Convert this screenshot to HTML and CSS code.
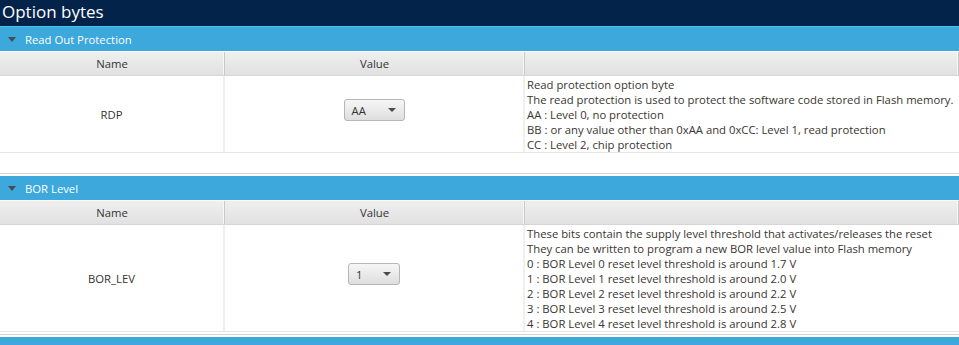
FILE: index.html
```html
<!DOCTYPE html>
<html lang="en">
<head>
    <meta charset="UTF-8">
    <title>Option bytes</title>
    <link rel="stylesheet" href="styles.css">
</head>
<body>

    <div class="titlebar">Option bytes</div>

    <!-- Read Out Protection -->
    <section class="pane">
        <div class="pane-head"><span class="caret"></span>Read Out Protection</div>
        <div class="pane-body rdp-body">
            <div class="grid grid-head">
                <div class="cell">Name</div>
                <div class="cell">Value</div>
                <div class="cell"></div>
            </div>
            <div class="grid grid-row">
                <div class="cell name">RDP</div>
                <div class="cell value">
                    <div class="combo combo-wide"><span>AA</span><span class="arrow"></span></div>
                </div>
                <div class="cell desc">
                    Read protection option byte<br>
                    The read protection is used to protect the software code stored in Flash memory.<br>
                    AA : Level 0, no protection<br>
                    BB : or any value other than 0xAA and 0xCC: Level 1, read protection<br>
                    CC : Level 2, chip protection
                </div>
            </div>
        </div>
    </section>

    <!-- BOR Level -->
    <section class="pane">
        <div class="pane-head"><span class="caret"></span>BOR Level</div>
        <div class="pane-body bor-body">
            <div class="grid grid-head">
                <div class="cell">Name</div>
                <div class="cell">Value</div>
                <div class="cell"></div>
            </div>
            <div class="grid grid-row">
                <div class="cell name">BOR_LEV</div>
                <div class="cell value">
                    <div class="combo"><span>1</span><span class="arrow"></span></div>
                </div>
                <div class="cell desc">
                    These bits contain the supply level threshold that activates/releases the reset<br>
                    They can be written to program a new BOR level value into Flash memory<br>
                    0 : BOR Level 0 reset level threshold is around 1.7 V<br>
                    1 : BOR Level 1 reset level threshold is around 2.0 V<br>
                    2 : BOR Level 2 reset level threshold is around 2.2 V<br>
                    3 : BOR Level 3 reset level threshold is around 2.5 V<br>
                    4 : BOR Level 4 reset level threshold is around 2.8 V
                </div>
            </div>
        </div>
    </section>

    <section class="pane">
        <div class="pane-head"></div>
    </section>

</body>
</html>
```

FILE: styles.css
```css
/* Global */
body {
    margin: 0;
    font-family: 'Open Sans', 'Noto Sans', sans-serif;
    font-size: 11.3px;
    color: #333;
    background: #fff;
    overflow: hidden;
}

/* Title bar */
.titlebar {
    height: 26px;
    line-height: 24px;
    padding-left: 2px;
    background: #03234a;
    border-bottom: 1px solid #3fc6ee;
    color: #fff;
    font-size: 17px;
}

/* Titled panes */
.pane {
    margin-bottom: 2px;
}

.pane-head {
    height: 24px;
    background: #3ca8dc;
    color: #fff;
    display: flex;
    align-items: center;
}

.caret {
    width: 0;
    height: 0;
    margin: 1px 9px 0 8px;
    border-left: 4px solid transparent;
    border-right: 4px solid transparent;
    border-top: 5px solid #474c52;
}

.pane-body {
    box-sizing: border-box;
    border-bottom: 1px solid #d4d4d4;
    padding-top: 1px;
    overflow: hidden;
}

.rdp-body {
    height: 123px;
}

.bor-body {
    height: 135px;
}

/* Table */
.grid {
    display: grid;
    grid-template-columns: 225px 300px 1fr;
}

.grid-head {
    height: 23px;
    border-bottom: 1px solid #d6d6d6;
}

.grid-head .cell {
    background: linear-gradient(#efefef, #e1e1e1);
    border-right: 1px solid #c9c9c9;
    box-shadow: inset -1px 0 0 #f7f7f7;
    text-align: center;
    line-height: 23px;
}

.grid-row {
    border-bottom: 1px solid #e6e6e6;
}

.grid-row .cell {
    border-right: 2px solid #f0f0f0;
    display: flex;
    align-items: center;
    justify-content: center;
}

.grid-row .cell.desc {
    border-right: none;
    display: block;
    padding: 1px 0 0 2px;
    line-height: 15px;
    white-space: nowrap;
    color: #3a3530;
}

/* Combo box */
.combo {
    width: 35px;
    height: 20px;
    margin-bottom: 8px;
    border: 1px solid #b6b6b6;
    border-radius: 3px;
    background: linear-gradient(#f6f6f6, #dedede);
    display: flex;
    align-items: center;
    justify-content: space-between;
    padding: 0 8px 0 7px;
    color: #333;
}

.combo-wide {
    width: 44px;
}

.combo .arrow {
    width: 0;
    height: 0;
    border-left: 4px solid transparent;
    border-right: 4px solid transparent;
    border-top: 4px solid #4a4a4a;
}
```
